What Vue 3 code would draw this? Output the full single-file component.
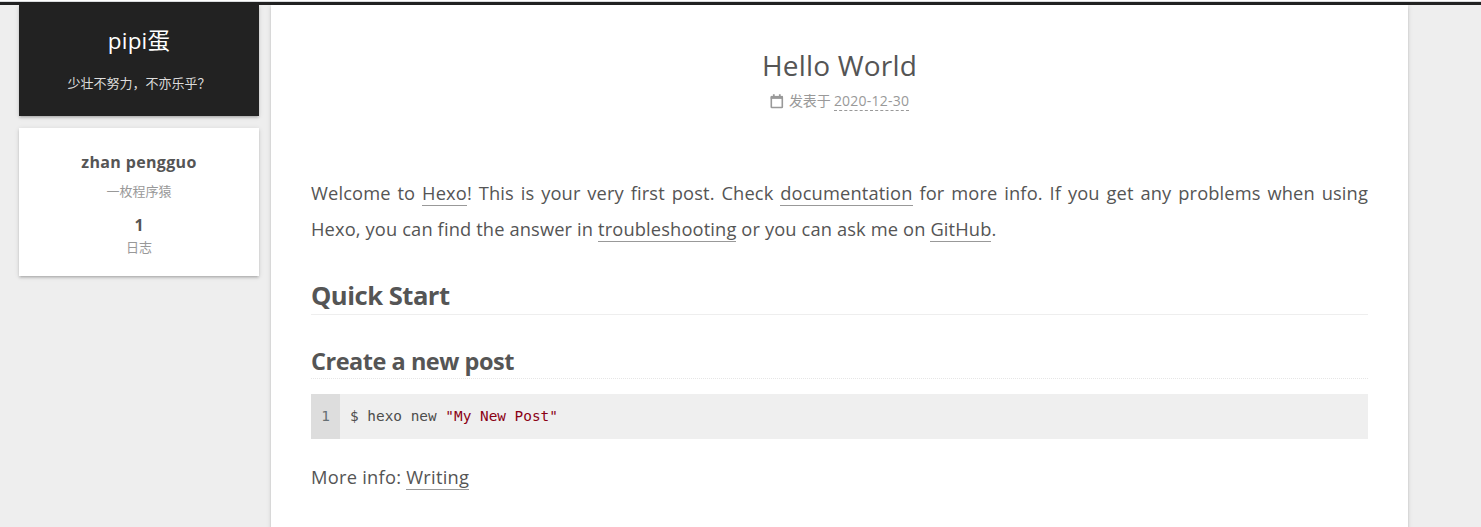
<script setup>
const author = { name: 'zhan pengguo', bio: '一枚程序猿', posts: 1 }
</script>

<template>
  <div class="page">
    <div class="edge"></div>
    <div class="headband"></div>
    <main class="main">
      <aside class="side">
        <header class="brand">
          <h1 class="site-title"><span>pipi蛋</span></h1>
          <p class="subtitle"><span>少壮不努力，不亦乐乎？</span></p>
        </header>
        <section class="card">
          <p class="author"><span>{{ author.name }}</span></p>
          <p class="bio">{{ author.bio }}</p>
          <p class="count">{{ author.posts }}</p>
          <p class="count-name">日志</p>
        </section>
      </aside>
      <article class="post">
        <h2 class="post-title"><span>Hello World</span></h2>
        <div class="meta">
          <svg class="cal" width="14" height="15" viewBox="0 0 14 15" fill="none" stroke="#999">
            <path d="M1.3 3.2H12.3V12.9Q12.3 13.5 11.7 13.5H1.9Q1.3 13.5 1.3 12.9Z" stroke-width="1.6" stroke-linejoin="round" />
            <path d="M.7 3.4H12.9" stroke-width="3" />
            <path d="M3.8 .3V3M9.8 .3V3" stroke-width="1.8" />
          </svg>
          <span class="label">发表于</span>
          <time class="date">2020-12-30</time>
        </div>
        <div class="body">
          <p class="line first"><span>Welcome to <a>Hexo</a>! This is your very first post. Check <a>documentation</a> for more info. If you get any problems when using</span></p>
          <p class="line"><span>Hexo, you can find the answer in <a>troubleshooting</a> or you can ask me on <a>GitHub</a>.</span></p>
          <h2 class="quick"><span>Quick Start</span></h2>
          <h3 class="create"><span>Create a new post</span></h3>
          <div class="code">
            <span class="gutter">1</span>
            <code class="src">$ hexo new <span class="str">"My New Post"</span></code>
          </div>
          <p class="line more"><span>More info: <a>Writing</a></span></p>
        </div>
      </article>
    </main>
  </div>
</template>

<style>
body { margin: 0; background: #eee; overflow: hidden; }
</style>

<style scoped>
.page { height: 527px; overflow: hidden; display: flex; flex-direction: column; background: #eee; color: #555; font-family: "Open Sans", "Noto Sans", "Noto Sans CJK SC", sans-serif; }
h1, h2, h3, p { margin: 0; white-space: nowrap; }
.edge { height: 1px; flex: none; background: #fff; border-bottom: 1px solid #dadcdf; }
.headband { height: 3px; flex: none; background: #222; }
.main { flex: 1; min-height: 0; display: flex; gap: 12px; padding-left: 19px; }
.side { width: 240px; text-align: center; }
.brand, .card, .post { box-shadow: 0 2px 2px 0 rgba(0,0,0,.12), 0 3px 1px -2px rgba(0,0,0,.06), 0 1px 5px 0 rgba(0,0,0,.12); }
.brand { box-sizing: border-box; height: 111px; padding-top: 18px; background: #222; color: #fff; }
.site-title { font-size: 22.5px; line-height: 36px; font-weight: 400; letter-spacing: .2px; }
.subtitle { font-size: 13px; line-height: 20px; margin-top: 14px; color: #ddd; }
.card { box-sizing: border-box; height: 148px; margin-top: 12px; padding-top: 22px; background: #fff; }
.author { font-size: 16px; line-height: 24px; font-weight: 700; letter-spacing: .35px; }
.bio { font-size: 13px; line-height: 20px; margin-top: 7px; color: #999; }
.count { font-size: 16px; line-height: 20px; margin-top: 14px; font-weight: 700; }
.count-name { font-size: 13px; line-height: 20px; margin-top: 2px; color: #999; }
.post { box-sizing: border-box; width: 1137px; height: 600px; padding: 42px 40px 0; background: #fff; }
.post-title { text-align: center; font-size: 28px; line-height: 36px; font-weight: 400; letter-spacing: .2px; }
.meta { display: flex; justify-content: center; align-items: center; height: 20px; margin-top: 8px; font-size: 14px; line-height: 19px; color: #999; }
.cal { margin-right: 5px; }
.label { margin-right: 3px; position: relative; top: -1px; }
.date { border-bottom: 1px dashed #999; letter-spacing: .22px; }
.body { margin-top: 64px; }
.line { font-size: 18.3px; line-height: 36px; letter-spacing: .13px; }
.line a { display: inline-block; line-height: 24px; border-bottom: 1px solid #999; }
.first { text-align-last: justify; }
.quick { box-sizing: border-box; height: 38px; margin-top: 30px; border-bottom: 1px solid #eee; font-size: 25.6px; line-height: 37px; font-weight: 700; letter-spacing: -.5px; }
.create { box-sizing: border-box; height: 36px; margin-top: 28px; border-bottom: 1px dotted #e6e6e6; font-size: 23.5px; line-height: 36px; font-weight: 700; letter-spacing: -.48px; }
.code { display: flex; height: 45px; margin-top: 15px; background: #efefef; font: 14.4px/45px "DejaVu Sans Mono", monospace; color: #4d4d4c; }
.gutter { width: 29px; text-align: center; background: #ddd; color: #666f73; }
.src { font: inherit; margin-left: 10px; white-space: pre; }
.str { color: #8a0014; }
.more { margin-top: 20px; letter-spacing: .25px; }
</style>
